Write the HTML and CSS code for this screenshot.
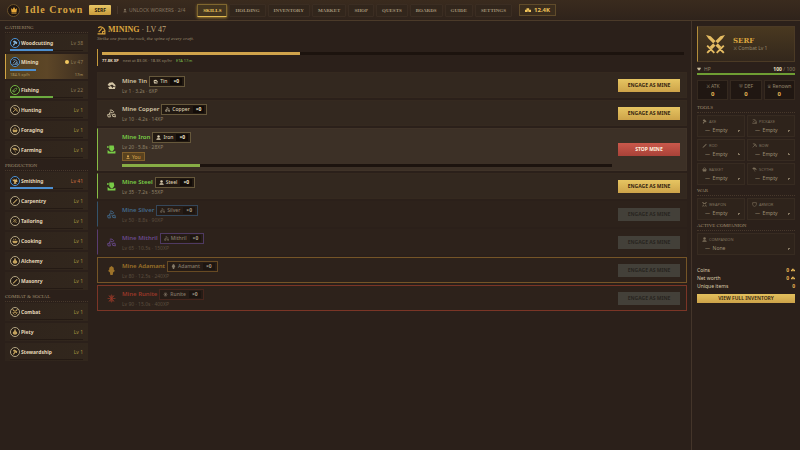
FILE: index.html
```html
<!DOCTYPE html>
<html lang="en">
<head>
    <meta charset="UTF-8">
    <meta name="viewport" content="width=device-width, initial-scale=1.0">
    <title>Idle Crown</title>
    <link rel="stylesheet" href="styles.css">
</head>
<body>

    <!-- Icon sprite -->
    <svg class="sprite" aria-hidden="true">
        <symbol id="i-crown" viewBox="0 0 16 16"><path d="M2 4l3 3 3-5 3 5 3-3-1 8H3zM3 13h10v2H3z" fill="currentColor"/></symbol>
        <symbol id="i-axe" viewBox="0 0 16 16"><path d="M3 3l4-2 7 5-1 5-4-2-4 6-3-2 5-6-4-1z" fill="currentColor"/></symbol>
        <symbol id="i-pick" viewBox="0 0 16 16"><path d="M2 3c5-3 10-1 12 5M9 4L3 11M1 14h14M10 14v-4l4-1v5" fill="none" stroke="currentColor" stroke-width="2"/></symbol>
        <symbol id="i-fish" viewBox="0 0 16 16"><path d="M3 13c0-6 4-10 10-10 0 6-4 9-8 8M3 13l-1-5M3 13h5" fill="none" stroke="currentColor" stroke-width="2"/></symbol>
        <symbol id="i-bow" viewBox="0 0 16 16"><path d="M4 2c8 0 10 4 10 10M4 2l10 10M2 14L12 4" fill="none" stroke="currentColor" stroke-width="2"/></symbol>
        <symbol id="i-basket" viewBox="0 0 16 16"><path d="M1 7h14l-2 7H3z" fill="currentColor"/><path d="M4 7c0-6 8-6 8 0" fill="none" stroke="currentColor" stroke-width="2"/></symbol>
        <symbol id="i-scythe" viewBox="0 0 16 16"><path d="M2 4c5-3 11-1 12 5-4-3-7-3-10-2zM6 6l4 9" fill="currentColor" stroke="currentColor" stroke-width="1.5"/></symbol>
        <symbol id="i-anvil" viewBox="0 0 16 16"><path d="M1 3l3 3 1-5 3 4 4-4 1 5 2 1c0 3-3 4-5 4v1l3 3H4l2-3V9C3 9 2 7 1 3z" fill="currentColor"/></symbol>
        <symbol id="i-saw" viewBox="0 0 16 16"><path d="M2 14L13 3M4 15L15 4" fill="none" stroke="currentColor" stroke-width="2"/></symbol>
        <symbol id="i-thread" viewBox="0 0 16 16"><path d="M3 3l10 10M3 7l6 6M7 3l6 6M12 2L2 12" fill="none" stroke="currentColor" stroke-width="1.5"/></symbol>
        <symbol id="i-pot" viewBox="0 0 16 16"><path d="M1 7h14c0 4-2 7-7 7S1 11 1 7zM4 2h2v3H4zM9 2h2v3H9z" fill="currentColor"/></symbol>
        <symbol id="i-flask" viewBox="0 0 16 16"><path d="M6 1h4v4c7 4 4 10-2 10S-1 9 6 5z" fill="currentColor"/></symbol>
        <symbol id="i-swords" viewBox="0 0 16 16"><path d="M0 0l4 1 9 9-2 2-9-9zM16 0l-4 1-9 9 2 2 9-9z" fill="currentColor"/><path d="M1 9l6 6M15 9l-6 6M1 15l3-3M15 15l-3-3" fill="none" stroke="currentColor" stroke-width="1.6"/></symbol>
        <symbol id="i-ore" viewBox="0 0 16 16"><path d="M1 7l3-4 6-1 5 5v3l-3-1-3-3-5 3zM2 11l5-2 3 4 1-3 4 1-1 3H4z" fill="currentColor"/></symbol>
        <symbol id="i-nuggets" viewBox="0 0 16 16"><path d="M5 2h4l3 3-2 2-4-2-2 4M1 10l4-1 1 5H2zM10 10l4-1 1 5-5-1zM7 8l2 2" fill="none" stroke="currentColor" stroke-width="1.6"/></symbol>
        <symbol id="i-miner" viewBox="0 0 16 16"><path d="M4 1h8l1 6-3 4H7L4 7zM1 15V9l4 3h6l4-2v5zM0 2h3v3H0z" fill="currentColor"/></symbol>
        <symbol id="i-gem" viewBox="0 0 16 16"><path d="M8 0l4 3v3l2 3-3 2-1 5H6l-1-5-3-2 2-3V3z" fill="currentColor"/></symbol>
        <symbol id="i-rune" viewBox="0 0 16 16"><path d="M8 1v14M1 8h14M3 3l10 10M13 3L3 13M5 2l6 12M11 2L5 14" fill="none" stroke="currentColor" stroke-width="1.2"/></symbol>
        <symbol id="i-person" viewBox="0 0 16 16"><circle cx="8" cy="5" r="4" fill="currentColor"/><path d="M1 15c0-6 14-6 14 0z" fill="currentColor"/></symbol>
        <symbol id="i-coins" viewBox="0 0 16 16"><path d="M0 7h7v6H0zM4 3h7v6H4zM9 7h7v6H9z" fill="currentColor"/></symbol>
        <symbol id="i-heart" viewBox="0 0 16 16"><path d="M8 15L1 7c-1-6 6-7 7-3 1-4 8-3 7 3z" fill="currentColor"/></symbol>
        <symbol id="i-shield" viewBox="0 0 16 16"><path d="M2 2h12v6c0 3-3 5-6 7-3-2-6-4-6-7z" fill="none" stroke="currentColor" stroke-width="2"/></symbol>
    </svg>

    <!-- Top bar -->
    <header class="topbar">
        <span class="logo"><svg><use href="#i-crown"/></svg></span>
        <h1>Idle Crown</h1>
        <span class="rank">SERF</span>
        <span class="workers"><svg><use href="#i-person"/></svg>UNLOCK WORKERS · 2/4</span>
        <nav>
            <button class="active">SKILLS</button>
            <button>HOLDING</button>
            <button>INVENTORY</button>
            <button>MARKET</button>
            <button>SHOP</button>
            <button>QUESTS</button>
            <button>BOARDS</button>
            <button>GUIDE</button>
            <button>SETTINGS</button>
        </nav>
        <span class="purse"><svg><use href="#i-coins"/></svg>12.4K</span>
    </header>

    <div class="layout">

        <!-- Skills -->
        <aside class="skills">
            <h2>GATHERING</h2>
            <ul>
                <li class="blue"><span class="ring"><svg><use href="#i-axe"/></svg></span><b>Woodcutting</b><em>Lv 38</em><i class="xp" style="width: 52%"></i></li>
                <li class="blue current"><span class="ring"><svg><use href="#i-pick"/></svg></span><b>Mining</b><em><span class="dot"></span>Lv 47</em><i class="xp" style="width: 32%"></i>
                    <small><span>184.5 xp/h</span><span>17m</span></small></li>
                <li class="green"><span class="ring"><svg><use href="#i-fish"/></svg></span><b>Fishing</b><em>Lv 22</em><i class="xp" style="width: 52%"></i></li>
                <li><span class="ring"><svg><use href="#i-bow"/></svg></span><b>Hunting</b><em>Lv 1</em></li>
                <li><span class="ring"><svg><use href="#i-basket"/></svg></span><b>Foraging</b><em>Lv 1</em></li>
                <li><span class="ring"><svg><use href="#i-scythe"/></svg></span><b>Farming</b><em>Lv 1</em></li>
            </ul>
            <h2>PRODUCTION</h2>
            <ul>
                <li class="blue"><span class="ring gold"><svg><use href="#i-anvil"/></svg></span><b>Smithing</b><em class="warm">Lv 41</em><i class="xp" style="width: 52%"></i></li>
                <li><span class="ring"><svg><use href="#i-saw"/></svg></span><b>Carpentry</b><em>Lv 1</em></li>
                <li><span class="ring"><svg><use href="#i-thread"/></svg></span><b>Tailoring</b><em>Lv 1</em></li>
                <li><span class="ring"><svg><use href="#i-pot"/></svg></span><b>Cooking</b><em>Lv 1</em></li>
                <li><span class="ring"><svg><use href="#i-flask"/></svg></span><b>Alchemy</b><em>Lv 1</em></li>
                <li><span class="ring"><svg><use href="#i-saw"/></svg></span><b>Masonry</b><em>Lv 1</em></li>
            </ul>
            <h2>COMBAT &amp; SOCIAL</h2>
            <ul>
                <li><span class="ring"><svg><use href="#i-swords"/></svg></span><b>Combat</b><em>Lv 1</em></li>
                <li><span class="ring"><svg><use href="#i-flask"/></svg></span><b>Piety</b><em>Lv 1</em></li>
                <li><span class="ring"><svg><use href="#i-axe"/></svg></span><b>Stewardship</b><em>Lv 1</em></li>
            </ul>
        </aside>

        <!-- Mining -->
        <main>
            <h2 class="title"><svg><use href="#i-pick"/></svg><strong>MINING</strong> · LV 47</h2>
            <p class="flavour">Strike ore from the rock, the spine of every craft.</p>

            <section class="progress">
                <div class="bar"><div style="width: 34%"></div></div>
                <p><b>77.8K XP</b> <span>next at 83.0K · 18.3K xp/hr</span> <span class="eta">ETA 17m</span></p>
            </section>

            <article class="ore">
                <svg><use href="#i-ore"/></svg>
                <div class="info">
                    <h3>Mine Tin <span class="chip"><svg><use href="#i-ore"/></svg>Tin<b>×0</b></span></h3>
                    <p>Lv 1 · 3.2s · 6XP</p>
                </div>
                <button class="engage">ENGAGE AS MINE</button>
            </article>
            <article class="ore">
                <svg><use href="#i-nuggets"/></svg>
                <div class="info">
                    <h3>Mine Copper <span class="chip"><svg><use href="#i-nuggets"/></svg>Copper<b>×0</b></span></h3>
                    <p>Lv 10 · 4.2s · 14XP</p>
                </div>
                <button class="engage">ENGAGE AS MINE</button>
            </article>
            <article class="ore good working">
                <svg><use href="#i-miner"/></svg>
                <div class="info">
                    <h3>Mine Iron <span class="chip"><svg><use href="#i-person"/></svg>Iron<b>×0</b></span></h3>
                    <p>Lv 20 · 5.8s · 28XP</p>
                    <span class="worker"><svg><use href="#i-person"/></svg>You</span>
                    <div class="bar"><div style="width: 16%"></div></div>
                </div>
                <button class="engage stop">STOP MINE</button>
            </article>
            <article class="ore good">
                <svg><use href="#i-miner"/></svg>
                <div class="info">
                    <h3>Mine Steel <span class="chip"><svg><use href="#i-person"/></svg>Steel<b>×0</b></span></h3>
                    <p>Lv 35 · 7.2s · 55XP</p>
                </div>
                <button class="engage">ENGAGE AS MINE</button>
            </article>
            <article class="ore locked silver">
                <svg><use href="#i-nuggets"/></svg>
                <div class="info">
                    <h3>Mine Silver <span class="chip"><svg><use href="#i-nuggets"/></svg>Silver<b>×0</b></span></h3>
                    <p>Lv 50 · 8.8s · 90XP</p>
                </div>
                <button class="engage" disabled>ENGAGE AS MINE</button>
            </article>
            <article class="ore locked mithril">
                <svg><use href="#i-nuggets"/></svg>
                <div class="info">
                    <h3>Mine Mithril <span class="chip"><svg><use href="#i-nuggets"/></svg>Mithril<b>×0</b></span></h3>
                    <p>Lv 65 · 10.5s · 150XP</p>
                </div>
                <button class="engage" disabled>ENGAGE AS MINE</button>
            </article>
            <article class="ore locked adamant">
                <svg><use href="#i-gem"/></svg>
                <div class="info">
                    <h3>Mine Adamant <span class="chip"><svg><use href="#i-gem"/></svg>Adamant<b>×0</b></span></h3>
                    <p>Lv 80 · 12.5s · 240XP</p>
                </div>
                <button class="engage" disabled>ENGAGE AS MINE</button>
            </article>
            <article class="ore locked runite">
                <svg><use href="#i-rune"/></svg>
                <div class="info">
                    <h3>Mine Runite <span class="chip"><svg><use href="#i-rune"/></svg>Runite<b>×0</b></span></h3>
                    <p>Lv 90 · 15.0s · 400XP</p>
                </div>
                <button class="engage" disabled>ENGAGE AS MINE</button>
            </article>
        </main>

        <!-- Character -->
        <aside class="hero">
            <div class="card">
                <svg><use href="#i-swords"/></svg>
                <div>
                    <h2>SERF</h2>
                    <p>⚔ Combat Lv 1</p>
                </div>
            </div>
            <div class="hp"><span><svg><use href="#i-heart"/></svg>HP</span><span><b>100</b> / 100</span></div>
            <div class="hpbar"></div>
            <div class="stats">
                <div><span>⚔ ATK</span><b>0</b></div>
                <div><span>⛨ DEF</span><b>0</b></div>
                <div><span>♕ Renown</span><b>0</b></div>
            </div>

            <h4>TOOLS</h4>
            <div class="slots">
                <div class="slot"><label for="axe"><svg><use href="#i-axe"/></svg>AXE</label><select id="axe"><option>—&nbsp; Empty</option></select></div>
                <div class="slot"><label for="pickaxe"><svg><use href="#i-pick"/></svg>PICKAXE</label><select id="pickaxe"><option>—&nbsp; Empty</option></select></div>
                <div class="slot"><label for="rod"><svg><use href="#i-saw"/></svg>ROD</label><select id="rod"><option>—&nbsp; Empty</option></select></div>
                <div class="slot"><label for="bow"><svg><use href="#i-bow"/></svg>BOW</label><select id="bow"><option>—&nbsp; Empty</option></select></div>
                <div class="slot"><label for="basket"><svg><use href="#i-basket"/></svg>BASKET</label><select id="basket"><option>—&nbsp; Empty</option></select></div>
                <div class="slot"><label for="scythe"><svg><use href="#i-scythe"/></svg>SCYTHE</label><select id="scythe"><option>—&nbsp; Empty</option></select></div>
            </div>
            <h4>WAR</h4>
            <div class="slots">
                <div class="slot"><label for="weapon"><svg><use href="#i-swords"/></svg>WEAPON</label><select id="weapon"><option>—&nbsp; Empty</option></select></div>
                <div class="slot"><label for="armor"><svg><use href="#i-shield"/></svg>ARMOR</label><select id="armor"><option>—&nbsp; Empty</option></select></div>
            </div>
            <h4>ACTIVE COMPANION</h4>
            <div class="slots">
                <div class="slot wide"><label for="companion"><svg><use href="#i-person"/></svg>COMPANION</label><select id="companion"><option>—&nbsp; None</option></select></div>
            </div>

            <dl>
                <div><dt>Coins</dt><dd>0 <svg><use href="#i-coins"/></svg></dd></div>
                <div><dt>Net worth</dt><dd>0 <svg><use href="#i-coins"/></svg></dd></div>
                <div><dt>Unique items</dt><dd>0</dd></div>
            </dl>
            <button class="inventory">VIEW FULL INVENTORY</button>
        </aside>
    </div>

</body>
</html>
```

FILE: styles.css
```css
* {
    box-sizing: border-box;
}

body {
    margin: 0;
    min-height: 100vh;
    display: flex;
    flex-direction: column;
    background: #2b201a;
    color: #d8c9a8;
    font-family: "Noto Sans", sans-serif;
    font-size: 5px;
    line-height: 8px;
}

h1, h2, h3, h4, p, ul, dl, dd {
    margin: 0;
    padding: 0;
    font-weight: normal;
}

ul {
    list-style: none;
}

em, i {
    font-style: normal;
}

button, select {
    font-family: inherit;
    font-size: 5px;
    line-height: 7px;
    cursor: pointer;
}

svg {
    width: 6px;
    height: 6px;
    flex: none;
}

.sprite {
    position: absolute;
    width: 0;
    height: 0;
}

/* Top bar */
.topbar {
    display: flex;
    align-items: center;
    height: 21px;
    padding-left: 7px;
    background: linear-gradient(#3a2b1e, #2f231b);
    border-bottom: 1px solid #4b3a29;
}

.logo {
    display: grid;
    place-items: center;
    width: 13px;
    height: 13px;
    border: 1px solid #6b5129;
    border-radius: 50%;
    background: #211711;
    color: #e8a93a;
}

.logo svg {
    width: 8px;
    height: 8px;
}

h1 {
    margin-left: 5px;
    color: #d9a441;
    font: bold 10px/12px "Liberation Serif", serif;
    letter-spacing: 1px;
}

.rank {
    margin-left: 6px;
    padding: 1px 5px;
    border-radius: 1px;
    background: linear-gradient(#e9c766, #c99c3c);
    color: #2b1c0c;
    font-weight: bold;
}

.workers {
    display: flex;
    align-items: center;
    gap: 2px;
    margin-left: 6px;
    padding-left: 5px;
    border-left: 1px solid #44352a;
    color: #857660;
}

.workers svg {
    width: 4px;
    height: 5px;
}

nav {
    display: flex;
    gap: 2px;
    margin-left: 12px;
}

nav button {
    height: 13px;
    padding: 0 5px;
    border: 1px solid #3b2d22;
    border-radius: 1px;
    background: #32261c;
    color: #a39478;
    font-family: "Liberation Serif", serif;
    font-weight: bold;
}

nav .active {
    border-color: #80672f;
    border-bottom-color: #e0b84f;
    background: #43351f;
    color: #ecc85f;
    box-shadow: 0 1px 3px #9a7a33;
}

.purse {
    display: flex;
    align-items: center;
    gap: 3px;
    margin-left: 7px;
    height: 12px;
    padding: 0 5px;
    border: 1px solid #604b2a;
    background: #3b2d1d;
    color: #f0c35a;
    font-size: 6px;
    font-weight: bold;
}

/* Columns */
.layout {
    flex: 1;
    display: grid;
    grid-template-columns: 92px minmax(0, 1fr) 109px;
}

/* Skills */
.skills {
    padding: 3px 4px 0 5px;
}

.skills h2, h4 {
    border-bottom: 1px dotted #47382b;
    color: #a08f70;
    font: 5px/8px "Liberation Serif", serif;
}

.skills ul {
    display: grid;
    gap: 2px;
    margin: 1px 0 3px;
}

.skills li {
    position: relative;
    display: flex;
    flex-wrap: wrap;
    align-items: center;
    gap: 0 1px;
    min-height: 18px;
    padding: 0 5px 1px;
    background: linear-gradient(90deg, #2f241c, #32271d);
}

.skills li::after {
    content: "";
    position: absolute;
    left: 5px;
    right: 5px;
    bottom: 1px;
    height: 1px;
    background: #241a14;
}

.ring {
    display: grid;
    place-items: center;
    width: 10px;
    height: 10px;
    border: 1px solid #b5a683;
    border-radius: 50%;
    background: #231a14;
    color: #c3a25d;
}

.blue .ring {
    border-color: #4b93d6;
    color: #82b4dc;
}

.blue .gold {
    color: #d6b268;
}

.green .ring {
    border-color: #75b843;
    color: #6fa64a;
}

.skills b {
    color: #e3d6b8;
}

.skills em {
    display: flex;
    align-items: center;
    gap: 2px;
    margin-left: auto;
    color: #a7943f;
}

.skills .blue em, .skills .green em {
    color: #8d7b55;
}

.skills .blue .warm {
    color: #cf7040;
}

.dot {
    width: 4px;
    height: 4px;
    border-radius: 50%;
    background: #f2c860;
}

.xp {
    position: absolute;
    z-index: 1;
    left: 5px;
    top: 15px;
    height: 2px;
    background: #4d8fd0;
}

.green .xp {
    background: #6cab3f;
}

.skills .current {
    padding: 3px 5px 0 4px;
    border-left: 1px solid #d2a544;
    background: linear-gradient(90deg, #51401f, #5d4627 50%, #3b2d20);
}

.current .xp {
    left: 4px;
}

.current small {
    display: flex;
    justify-content: space-between;
    width: 100%;
    margin-top: 3px;
    font-size: 4px;
    line-height: 9px;
    color: #b09a62;
}

.skills .current::after {
    display: none;
}

/* Mining */
main {
    display: flex;
    flex-direction: column;
    gap: 2px;
    padding: 4px 4px 0 5px;
}

.title {
    display: flex;
    align-items: center;
    gap: 2px;
    color: #c2a878;
    font: 8px/10px "Liberation Serif", serif;
}

.title svg {
    width: 9px;
    height: 9px;
    color: #dca63e;
}

.title strong {
    color: #dca63e;
}

.flavour {
    margin-top: -2px;
    color: #9a8b6f;
    font: italic 5px/8px "Liberation Serif", serif;
}

.progress {
    margin: 4px 0;
    padding: 3px 3px 2px 4px;
    border-left: 1px solid #c69a3c;
    color: #998a6e;
    font-size: 4px;
}

.progress b {
    color: #e8dcc0;
}

.progress .eta {
    color: #7cb84a;
}

.bar {
    height: 3px;
    background: #1c130e;
}

.bar div {
    height: 100%;
    background: #87ad45;
}

.progress .bar {
    margin-bottom: 2px;
}

.progress .bar div {
    background: #d0a34b;
}

.progress p {
    display: flex;
    gap: 4px;
    line-height: 7px;
}

.ore {
    display: flex;
    align-items: center;
    gap: 6px;
    min-height: 26px;
    padding: 0 6px 0 9px;
    border: 1px solid #35291f;
    background: #33281f;
    color: #d5c7a7;
}

.ore > svg {
    width: 9px;
    height: 9px;
}

.info {
    flex: 1;
}

.info h3 {
    display: flex;
    align-items: center;
    gap: 2px;
    font-size: 6px;
    line-height: 11px;
    font-weight: 600;
}

.info p {
    color: #8f8168;
    line-height: 8px;
}

.chip {
    display: flex;
    align-items: center;
    gap: 2px;
    height: 11px;
    padding: 0 2px 0 3px;
    border: 1px solid #66583b;
    background: #211811;
    color: #ddd0b2;
    font-size: 5px;
    font-weight: 500;
}

.chip svg {
    width: 5px;
    height: 5px;
}

.chip b {
    margin-left: 1px;
    padding: 0 3px;
    background: #120c08;
    color: #f5ebd3;
    line-height: 7px;
}

.good {
    border-left-color: #87bd45;
    color: #78cc46;
}

.working {
    border-color: #403328;
    border-left-color: #87bd45;
    background: #3c3026;
}

.working .info {
    padding: 3px 0;
}

.worker {
    display: inline-flex;
    align-items: center;
    gap: 2px;
    height: 9px;
    margin-top: 1px;
    padding: 0 3px;
    border: 1px solid #82602b;
    background: #59421f;
    color: #dfab50;
    vertical-align: top;
}

.worker svg {
    width: 4px;
    height: 4px;
}

.working .bar {
    margin-top: 3px;
}

.engage {
    width: 62px;
    height: 13px;
    padding: 0;
    border: 0;
    background: linear-gradient(#e6c562, #cda349);
    color: #35240f;
    font-weight: bold;
}

.engage.stop {
    background: linear-gradient(#c9584b, #a94238);
    color: #fff0df;
}

.locked {
    border-color: #2d221b;
    background: #2d221b;
}

.locked .info p {
    color: #5b4d3e;
}

.locked .chip {
    background: #261c16;
    color: #857a68;
}

.locked .chip b {
    background: #1d1510;
    color: #a39a86;
}

.locked .engage {
    background: #434039;
    color: #282520;
    cursor: default;
}

.silver {
    border-left-color: #34536b;
    color: #42698a;
}

.silver .chip {
    border-color: #35475a;
}

.mithril {
    border-left-color: #5a3d72;
    color: #69498b;
}

.mithril .chip {
    border-color: #4f3a62;
}

.adamant {
    border-color: #755527;
    color: #9d7229;
}

.adamant .chip {
    border-color: #674a23;
}

.runite {
    border-color: #7b3526;
    color: #9a3829;
}

.runite .chip {
    border-color: #46261d;
}

/* Character */
.hero {
    padding: 5px 5px 0;
    border-left: 1px solid #44352a;
}

.card {
    display: flex;
    align-items: center;
    gap: 8px;
    height: 36px;
    padding-left: 8px;
    border: 1px solid #4b3a25;
    border-left-color: #b38d3a;
    background: linear-gradient(#493820, #33271c);
}

.card svg {
    width: 19px;
    height: 19px;
    color: #e5bc62;
}

.card h2 {
    color: #dca63e;
    font: bold 7px/9px "DejaVu Serif", serif;
}

.card p {
    color: #95866b;
    line-height: 7px;
}

.hp {
    display: flex;
    justify-content: space-between;
    margin-top: 3px;
    color: #8f8168;
}

.hp span:first-child {
    display: flex;
    align-items: center;
    gap: 3px;
}

.hp svg {
    width: 4px;
    height: 4px;
    color: #c9bb9a;
}

.hp b {
    color: #ece0c4;
}

.hpbar {
    height: 2px;
    background: #6e9d33;
}

.stats {
    display: grid;
    grid-template-columns: repeat(3, 1fr);
    gap: 2px;
    margin: 5px 0 4px;
}

.stats div {
    display: grid;
    height: 20px;
    padding: 1px 0;
    border: 1px solid #35291f;
    background: #201712;
    color: #94866c;
    text-align: center;
}

.stats span {
    font-size: 5px;
    line-height: 8px;
    white-space: nowrap;
}

.stats b {
    color: #e6b654;
    font-size: 6px;
    line-height: 8px;
}

.slots {
    display: grid;
    grid-template-columns: 1fr 1fr;
    gap: 2px;
    margin: 2px 0;
}

.slot {
    height: 22px;
    padding: 1px 4px;
    border: 1px solid #372b21;
    background: #2e231b;
}

.wide {
    grid-column: span 2;
}

.slot label {
    display: flex;
    align-items: center;
    gap: 2px;
    height: 9px;
    color: #7d705b;
    font-size: 4px;
}

.slot svg {
    width: 5px;
    height: 5px;
}

.slot select {
    display: block;
    width: 100%;
    height: 9px;
    padding: 0 0 0 3px;
    border: 0;
    appearance: none;
    background: radial-gradient(circle, #857761 1px, transparent 1px) right center / 3px 3px no-repeat;
    color: #9d8f75;
}

dl {
    margin: 11px 0 4px;
}

dl div {
    display: flex;
    justify-content: space-between;
    font-size: 5px;
}

dd {
    display: flex;
    align-items: center;
    gap: 2px;
    color: #e6b654;
    font-weight: bold;
}

dd svg {
    width: 4px;
    height: 4px;
}

.inventory {
    display: block;
    width: 100%;
    height: 9px;
    padding: 0;
    border: 0;
    background: linear-gradient(#e3c05d, #cda349);
    color: #35240f;
    font-weight: 600;
}
```
